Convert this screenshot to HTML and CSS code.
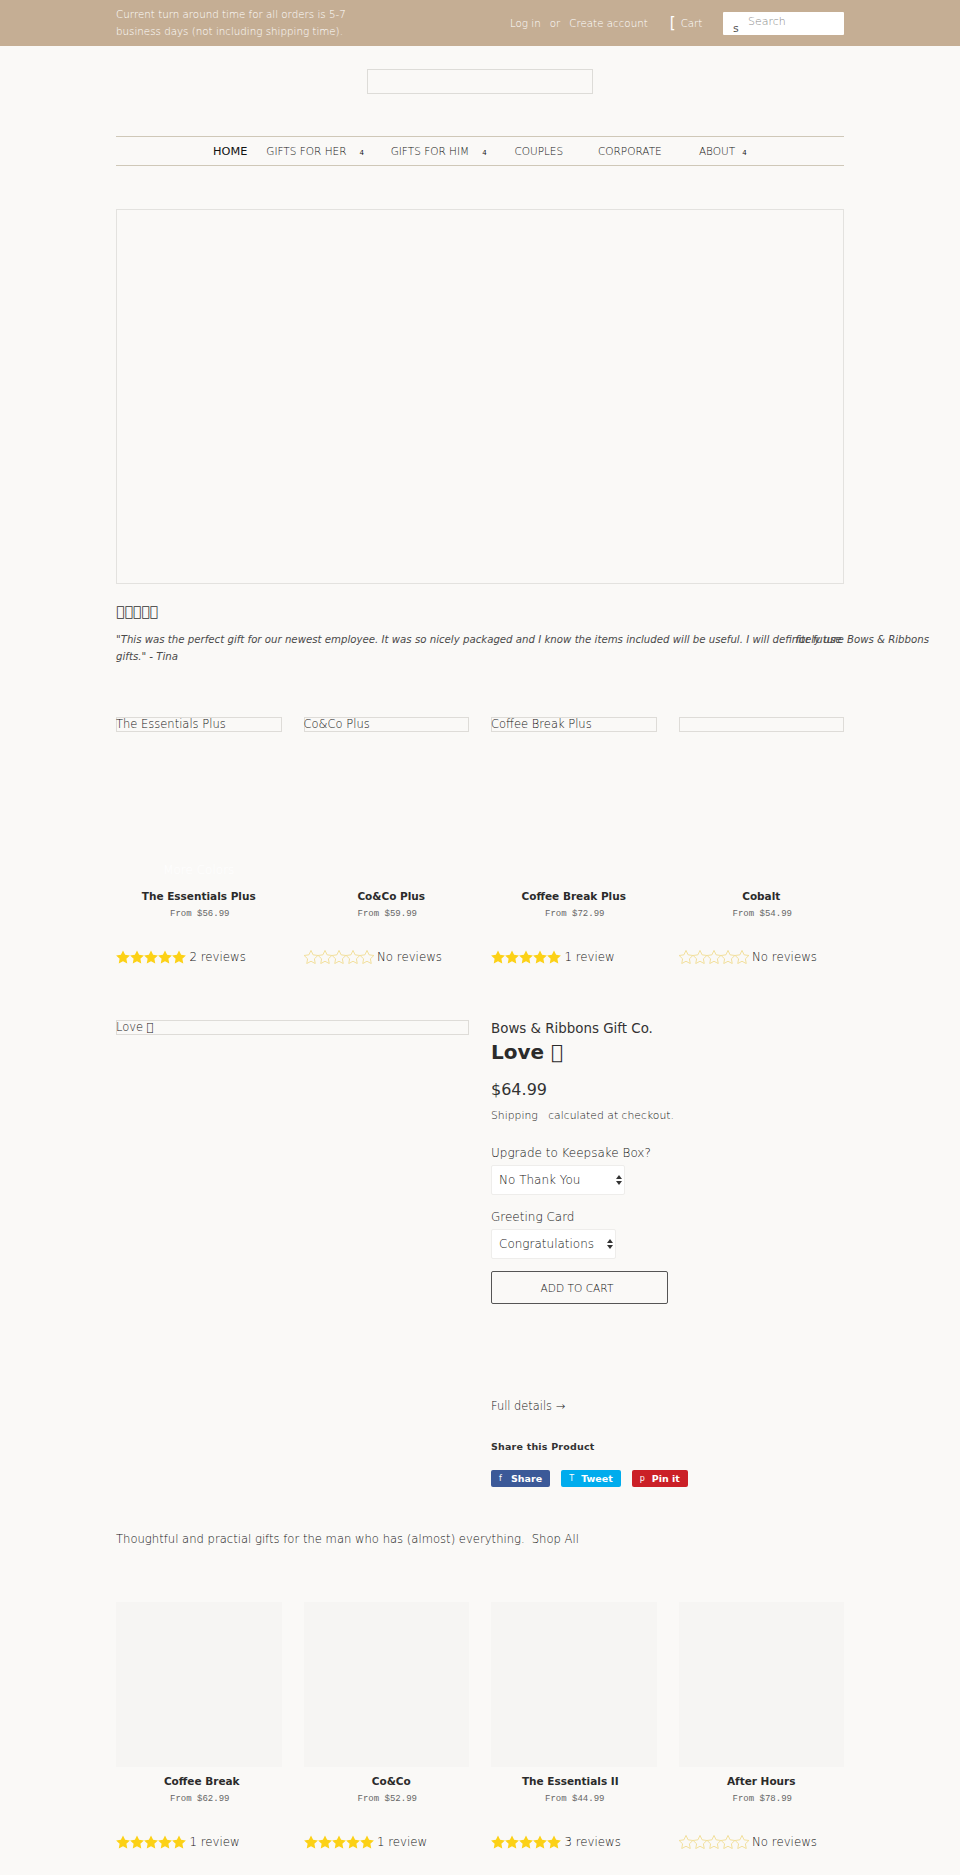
FILE: index.html
```html
<!DOCTYPE html>
<html lang="en">
<head>
<meta charset="utf-8">
<title>Bows &amp; Ribbons Gift Co.</title>
<link rel="stylesheet" href="styles.css">
</head>
<body>
<svg class="defs" width="0" height="0" aria-hidden="true">
  <symbol id="star" viewBox="0 0 24 24"><path d="M12 .8l3.600 7.500 8.200 1.100-6 5.700 1.500 8.100-7.300-3.900-7.300 3.900 1.500-8.100-6-5.700 8.200-1.100z"/></symbol>
</svg>
<header class="topbar">
  <div class="wrap topbar-inner">
    <p class="notice">Current turn around time for all orders is 5-7 business days (not including shipping time).</p>
    <div class="account">
      <a>Log in</a><span class="or">or</span><a>Create account</a>
      <span class="cart-icon">[</span><a>Cart</a>
    </div>
    <div class="search"><span class="search-icon">s</span><span class="search-text">Search</span></div>
  </div>
</header>
<main class="wrap">
  <div class="logo"></div>
  <nav class="nav">
    <a class="active n-home">HOME</a>
    <a class="n-her">GIFTS FOR HER<i>4</i></a>
    <a class="n-him">GIFTS FOR HIM<i>4</i></a>
    <a class="n-cou">COUPLES</a>
    <a class="n-cor">CORPORATE</a>
    <a class="n-abo">ABOUT<i class="near">4</i></a>
  </nav>
  <div class="hero"></div>
  <h2 class="stars-head">&#xFFFF;&#xFFFF;&#xFFFF;&#xFFFF;&#xFFFF;</h2>
  <p class="quote">"This was the perfect gift for our newest employee. It was so nicely packaged and I know the items included will be useful. I will definitely use<span class="over">for future Bows &amp; Ribbons</span><br>gifts." - Tina</p>

  <section class="grid grid-top">
    <article class="card">
      <div class="thumb">The Essentials Plus</div>
      <div class="more">More Colors</div>
      <h3>The Essentials Plus</h3>
      <p class="price">From $56.99</p>
      <div class="rating"><span class="stars"><svg><use href="#star"/></svg><svg><use href="#star"/></svg><svg><use href="#star"/></svg><svg><use href="#star"/></svg><svg><use href="#star"/></svg></span>2 reviews</div>
    </article>
    <article class="card">
      <div class="thumb">Co&amp;Co Plus</div>
      <div class="more"></div>
      <h3 class="right-10">Co&amp;Co Plus</h3>
      <p class="price">From $59.99</p>
      <div class="rating"><span class="stars empty"><svg><use href="#star"/></svg><svg><use href="#star"/></svg><svg><use href="#star"/></svg><svg><use href="#star"/></svg><svg><use href="#star"/></svg></span>No reviews</div>
    </article>
    <article class="card">
      <div class="thumb">Coffee Break Plus</div>
      <div class="more"></div>
      <h3>Coffee Break Plus</h3>
      <p class="price">From $72.99</p>
      <div class="rating"><span class="stars"><svg><use href="#star"/></svg><svg><use href="#star"/></svg><svg><use href="#star"/></svg><svg><use href="#star"/></svg><svg><use href="#star"/></svg></span>1 review</div>
    </article>
    <article class="card">
      <div class="thumb"></div>
      <div class="more"></div>
      <h3>Cobalt</h3>
      <p class="price">From $54.99</p>
      <div class="rating"><span class="stars empty"><svg><use href="#star"/></svg><svg><use href="#star"/></svg><svg><use href="#star"/></svg><svg><use href="#star"/></svg><svg><use href="#star"/></svg></span>No reviews</div>
    </article>
  </section>

  <section class="product">
    <div class="product-media"><div class="thumb">Love &#xFFFF;</div></div>
    <div class="product-info">
      <p class="vendor">Bows &amp; Ribbons Gift Co.</p>
      <h1 class="title">Love &#xFFFF;</h1>
      <p class="amount">$64.99</p>
      <p class="shipping"><a>Shipping</a> calculated at checkout.</p>
      <label class="opt-label">Upgrade to Keepsake Box?</label>
      <select class="select s1"><option>No Thank You</option></select>
      <label class="opt-label second">Greeting Card</label>
      <select class="select s2"><option>Congratulations</option></select>
      <button class="add">ADD TO CART</button>
      <a class="details">Full details →</a>
      <p class="share-head">Share this Product</p>
      <div class="share">
        <a class="fb"><i>f</i>Share</a>
        <a class="tw"><i>T</i>Tweet</a>
        <a class="pi"><i>p</i>Pin it</a>
      </div>
    </div>
  </section>

  <p class="collection">Thoughtful and practial gifts for the man who has (almost) everything.<a>Shop All</a></p>

  <section class="grid grid-bottom">
    <article class="card">
      <div class="img"></div>
      <h3 class="right-6">Coffee Break</h3>
      <p class="price">From $62.99</p>
      <div class="rating"><span class="stars"><svg><use href="#star"/></svg><svg><use href="#star"/></svg><svg><use href="#star"/></svg><svg><use href="#star"/></svg><svg><use href="#star"/></svg></span>1 review</div>
    </article>
    <article class="card">
      <div class="img"></div>
      <h3 class="right-10">Co&amp;Co</h3>
      <p class="price">From $52.99</p>
      <div class="rating"><span class="stars"><svg><use href="#star"/></svg><svg><use href="#star"/></svg><svg><use href="#star"/></svg><svg><use href="#star"/></svg><svg><use href="#star"/></svg></span>1 review</div>
    </article>
    <article class="card">
      <div class="img"></div>
      <h3 class="left-7">The Essentials II</h3>
      <p class="price">From $44.99</p>
      <div class="rating"><span class="stars"><svg><use href="#star"/></svg><svg><use href="#star"/></svg><svg><use href="#star"/></svg><svg><use href="#star"/></svg><svg><use href="#star"/></svg></span>3 reviews</div>
    </article>
    <article class="card">
      <div class="img"></div>
      <h3>After Hours</h3>
      <p class="price">From $78.99</p>
      <div class="rating"><span class="stars empty"><svg><use href="#star"/></svg><svg><use href="#star"/></svg><svg><use href="#star"/></svg><svg><use href="#star"/></svg><svg><use href="#star"/></svg></span>No reviews</div>
    </article>
  </section>
</main>
</body>
</html>
```

FILE: styles.css
```css
* { box-sizing: border-box; }
html, body { margin: 0; padding: 0; }
body {
  background: #faf9f7;
  color: #141414;
  font-family: "DejaVu Sans", sans-serif;
  font-weight: 200;
  font-size: 12px;
  height: 1875px;
  overflow: hidden;
}
p, h1, h2, h3 { margin: 0; }
.defs { position: absolute; }
.wrap { width: 728px; margin: 0 auto; }

.topbar { background: #c5ae94; height: 46px; color: #fff; font-size: 10.300px; }
.topbar-inner { display: flex; align-items: center; height: 46px; }
.notice { width: 247px; line-height: 17px; }
.account { margin-left: 147px; display: flex; align-items: center; white-space: nowrap; }
.or { margin: 0 9px; }
.cart-icon { margin: 0 5px 0 22px; font-size: 15px; font-weight: 400; }
.search { margin-left: auto; width: 121px; height: 23px; background: #fff; color: #888; position: relative; font-size: 11px; line-height: 16px; padding: 2px 0 0 25px; border-radius: 1px; }
.search-icon { position: absolute; left: 10px; top: 9px; color: #555; font-size: 11px; font-weight: 400; }

.logo { width: 226px; height: 25px; margin: 23px auto 0; border: 1px solid #dddcd8; }
.nav { margin-top: 42px; height: 30px; border-top: 1px solid #cfc8b8; border-bottom: 1px solid #cfc8b8; display: flex; align-items: center; font-size: 10.500px; }
.nav a { display: block; white-space: nowrap; font-weight: 200; }
.nav i { font-style: normal; font-size: 7px; font-weight: 400; margin-left: 13px; }
.nav i.near { margin-left: 7px; }
.nav .active { color: #111; font-weight: 400; font-size: 11.300px; }
.n-home { margin-left: 97px; }
.n-her { margin-left: 19px; }
.n-him { margin-left: 26.600px; }
.n-cou { margin-left: 27.800px; }
.n-cor { margin-left: 34.800px; }
.n-abo { margin-left: 37.200px; }

.hero { margin-top: 43px; height: 375px; border: 1px solid #e3e2df; }
.stars-head { margin-top: 18px; height: 18px; line-height: 18px; font-size: 14px; font-weight: 400; color: #333; }
.quote { margin-top: 11px; font-size: 10.200px; font-style: italic; line-height: 17px; white-space: nowrap; color: #4a4a4a; }
.over { margin-left: -46px; }

.grid { display: grid; grid-template-columns: repeat(4, 1fr); column-gap: 22px; }
.grid-top { margin-top: 52px; }
.grid-bottom { margin-top: 53px; }
.thumb { height: 15px; border: 1px solid #dedcd8; font-size: 11.500px; line-height: 13px; text-indent: -1px; white-space: nowrap; }
.more { height: 16px; margin-top: 130px; margin-bottom: 10px; color: #fff; text-align: center; font-size: 12px; line-height: 16px; }
.card h3 { margin-top: 6px; font-size: 10.500px; font-weight: 700; line-height: 16px; text-align: center; color: #2b2b2b; }
.card h3.right-10 { padding-left: 10px; }
.card h3.right-6 { padding-left: 6px; }
.card h3.left-7 { padding-right: 7px; }
.price { margin-top: 3px; padding-left: 2px; text-align: center; font-family: "Liberation Mono", monospace; font-weight: 400; font-size: 9px; line-height: 14px; color: #666; }
.rating { margin-top: 27px; height: 18px; display: flex; align-items: center; font-size: 11.800px; white-space: nowrap; }
.stars { display: flex; margin-right: 3.500px; fill: #fcd116; }
.stars svg { width: 14px; height: 14px; }
.stars.empty { fill: none; stroke: #f0dc90; stroke-width: 1.500; }

.product { display: grid; grid-template-columns: 353px 353px; column-gap: 22px; margin-top: 54px; }
.vendor { font-size: 13.400px; line-height: 18px; font-weight: 400; color: #333; }
.title { margin-top: 1px; font-size: 20px; line-height: 26px; font-weight: 700; color: #2b2b2b; }
.amount { margin-top: 14px; font-size: 16px; line-height: 22px; font-weight: 400; color: #333; }
.shipping { margin-top: 6px; font-size: 10.800px; line-height: 18px; }
.shipping a { margin-right: 7px; }
.opt-label { display: block; margin-top: 19px; font-size: 12px; line-height: 18px; }
.opt-label.second { margin-top: 13px; }
.select { display: block; appearance: none; -webkit-appearance: none; margin-top: 3px; height: 30px; border: 1px solid #eeedeb; border-radius: 2px; background: #fff url("data:image/svg+xml,%3Csvg xmlns='http://www.w3.org/2000/svg' width='6' height='10'%3E%3Cpath d='M3 0l3 4H0zM3 10L0 6h6z' fill='%23333'/%3E%3C/svg%3E") no-repeat right 2px center; font: 200 12px "DejaVu Sans", sans-serif; color: #141414; padding: 0 7px; }
.s1 { width: 134px; }
.s2 { width: 125px; }
.add { display: block; margin-top: 12px; width: 177px; height: 33px; padding: 0 5px 0 0; border: 1px solid #555; border-radius: 2px; background: transparent; font: 200 10.600px "DejaVu Sans", sans-serif; color: #141414; }
.details { display: block; margin-top: 93px; font-size: 11.400px; line-height: 18px; }
.share-head { margin-top: 24px; font-size: 9.500px; font-weight: 700; line-height: 16px; color: #333; letter-spacing: .2px; }
.share { display: flex; gap: 11px; margin-top: 15px; }
.share a { display: flex; align-items: center; height: 17px; padding: 0 8px; color: #fff; font-size: 9.500px; font-weight: 700; border-radius: 2px; }
.share i { display: block; width: 6px; font-style: normal; font-weight: 400; font-size: 8px; margin-right: 6px; }
.fb { background: #3b5998; }
.tw { background: #00aced; }
.pi { background: #cb2027; }

.collection { margin-top: 42px; font-size: 11.600px; line-height: 20px; }
.collection a { margin-left: 7px; }
.img { height: 165px; background: #f6f5f3; }
```
